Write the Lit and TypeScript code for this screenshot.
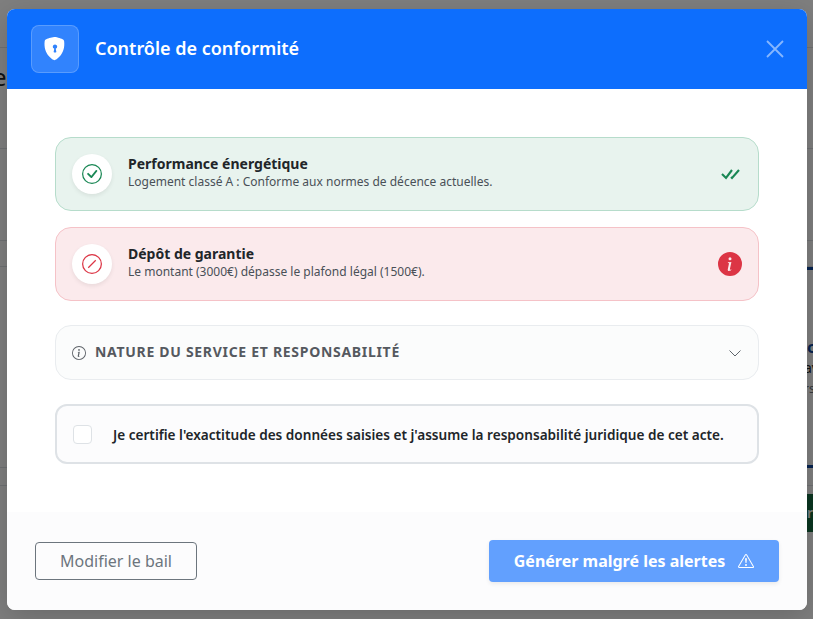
import { LitElement, html, css } from "lit";
import { customElement } from "lit/decorators.js";

@customElement("app-root")
export class AppRoot extends LitElement {
  static styles = css`
    :host { display: block; width: 813px; height: 619px; position: relative; overflow: hidden; font-family: "Noto Sans", sans-serif; color: #212529; background: #fff; }
    * { box-sizing: border-box; }
    .page { height: 619px; display: flex; flex-direction: column; overflow: hidden; }
    .prow { display: flex; justify-content: space-between; border-bottom: 1px solid #dee2e6; flex: none; }
    .r1 { height: 48px; }
    .r2 { height: 101px; align-items: flex-start; }
    .r3 { height: 92px; }
    .r4 { height: 26px; }
    .r5 { height: 201px; justify-content: flex-end; align-items: flex-start; }
    .r6 { height: 18px; }
    .r7 { flex: 1; border-bottom: 0; justify-content: flex-end; }
    .le { font-size: 24px; line-height: 32px; margin: 13px 0 0 -7px; color: #212529; }
    .side { width: 6px; height: 201px; margin-bottom: -1px; overflow: hidden; white-space: nowrap; display: flex; flex-direction: column; }
    .bar { width: 6px; height: 3px; background: #0d47a1; flex: none; }
    .sc { color: #0d47a1; font-weight: 700; font-size: 16px; line-height: 22px; margin-top: 66px; }
    .sa { font-size: 14px; line-height: 21px; margin-top: -1px; margin-left: -3px; }
    .sr { font-size: 12px; line-height: 21px; color: #6c757d; margin-left: -3px; }
    .bar2 { margin-top: auto; }
    .green { width: 6px; height: 38px; margin-top: 8px; background: #146c43; color: #fff; font-size: 14px; font-weight: 600; line-height: 38px; overflow: hidden; }

    .backdrop { position: absolute; inset: 0; background: rgba(0,0,0,.5); display: flex; justify-content: center; padding: 9px 0 0 1px; }
    .modal { width: 800px; height: 601px; flex: none; background: #fff; border-radius: 8px; overflow: hidden; display: flex; flex-direction: column; box-shadow: 0 8px 32px rgba(0,0,0,.18); }
    .head { height: 80px; flex: none; background: #0d6efd; display: flex; align-items: center; padding: 0 23px 0 24px; color: #fff; }
    .logo { width: 48px; height: 48px; border-radius: 8px; background: rgba(255,255,255,.15); border: 1px solid rgba(255,255,255,.2); display: flex; align-items: center; justify-content: center; margin-right: 16px; }
    .title { font-size: 18px; font-weight: 600; line-height: 27px; flex: 1; padding-bottom: 2px; }
    .close { width: 18px; height: 18px; display: block; }
    .body { flex: 1; padding: 48px 48px 0; display: flex; flex-direction: column; }
    .card { height: 74px; border-radius: 16px; border: 1px solid; display: flex; align-items: center; padding: 0 16px; margin-bottom: 16px; }
    .ok { background: #e8f3ee; border-color: #b6dccb; }
    .bad { background: #fbeaec; border-color: #f5c2c7; }
    .ic { width: 40px; height: 40px; border-radius: 50%; background: #fff; box-shadow: 0 2px 4px rgba(0,0,0,.075); display: flex; align-items: center; justify-content: center; margin-right: 16px; flex: none; }
    .txt { flex: 1; padding-bottom: 4px; }
    .t { font-size: 14px; font-weight: 700; line-height: 20px; color: #212529; }
    .s { font-size: 12px; line-height: 16px; color: #495057; }
    .acc { height: 55px; margin-top: 8px; border: 1px solid #e9ecef; border-radius: 16px; background: #fbfcfc; display: flex; align-items: center; padding: 0 16px; }
    .acc-t { flex: 1; margin-left: 9px; font-size: 14px; font-weight: 700; letter-spacing: .7px; line-height: 20px; padding-bottom: 2px; color: #55595f; }
    .chev { margin-right: 1px; }
    .cert { height: 60px; margin-top: 24px; border: 2px solid #dee2e6; border-radius: 12px; background: #fcfcfd; display: flex; align-items: center; padding: 0 16px; }
    .cb { width: 19px; height: 19px; border: 1px solid #dee2e6; border-radius: 4px; background: #fff; margin-right: 21px; flex: none; }
    .cert-t { font-size: 13.6px; font-weight: 600; color: #212529; }
    .foot { height: 98px; flex: none; background: #fcfcfd; display: flex; align-items: center; justify-content: space-between; padding: 0 28px; }
    .b1 { width: 162px; height: 38px; border: 1px solid #6c757d; border-radius: 4px; display: flex; align-items: center; justify-content: center; color: #6c757d; font-size: 16px; }
    .b2 { width: 290px; height: 42px; border-radius: 4px; background: #62a0fe; color: #fff; font-size: 16px; font-weight: 700; display: flex; align-items: center; justify-content: center; gap: 13px; box-shadow: 0 2px 4px rgba(0,0,0,.075); }
  `;

  render() {
    return html`
      <div class="page">
        <div class="prow r1"></div>
        <div class="prow r2"><span class="le">e</span></div>
        <div class="prow r3"></div>
        <div class="prow r4"></div>
        <div class="prow r5">
          <div class="side"><div class="bar"></div><span class="sc">c</span><span class="sa">av</span><span class="sr">rs</span><div class="bar bar2"></div></div>
        </div>
        <div class="prow r6"></div>
        <div class="prow r7"><div class="green">r</div></div>
      </div>
      <div class="backdrop">
        <div class="modal">
          <div class="head">
            <div class="logo">
              <svg width="24" height="24" viewBox="0 0 16 16" fill="#fff"><path fill-rule="evenodd" d="M8 0c-.69 0-1.84.28-2.92.57C3.95.88 2.84 1.23 2.18 1.44c-.55.18-.97.68-1.05 1.25C.55 7.04 1.9 10.25 3.53 12.39a11.6 11.6 0 0 0 2.42 2.3c.34.24.65.42.92.55.24.12.52.21.73.21s.49-.09.73-.21c.27-.13.58-.31.92-.55a11.6 11.6 0 0 0 2.42-2.3c1.63-2.14 2.98-5.35 2.4-9.7-.08-.57-.5-1.07-1.05-1.25-.66-.21-1.77-.56-2.9-.87C9.84.28 8.69 0 8 0zm0 5a1.5 1.5 0 0 1 .5 2.91l.39 1.93A.5.5 0 0 1 8.4 10.4H7.6a.5.5 0 0 1-.49-.56l.39-1.93A1.5 1.5 0 0 1 8 5z"/></svg>
            </div>
            <div class="title">Contrôle de conformité</div>
            <svg class="close" viewBox="0 0 18 18" stroke="#fff" stroke-opacity=".5" stroke-width="1.8" fill="none"><path d="M1 1l16 16M17 1L1 17"/></svg>
          </div>
          <div class="body">
            <div class="card ok">
              <div class="ic"><svg width="20" height="20" viewBox="0 0 16 16" fill="#198754"><path d="M8 15A7 7 0 1 1 8 1a7 7 0 0 1 0 14zm0 1A8 8 0 1 0 8 0a8 8 0 0 0 0 16z"/><path d="M10.97 4.97a.235.235 0 0 0-.02.022L7.477 9.417 5.384 7.323a.75.75 0 0 0-1.06 1.06L6.97 11.03a.75.75 0 0 0 1.079-.02l3.992-4.99a.75.75 0 0 0-1.071-1.05z"/></svg></div>
              <div class="txt"><div class="t">Performance énergétique</div><div class="s">Logement classé A : Conforme aux normes de décence actuelles.</div></div>
              <svg class="chev" width="20" height="14" viewBox="0 0 20 14" fill="none" stroke="#198754" stroke-width="2.100"><path d="M1 7l4 4 6-8M10 10l1 1 7-8"/></svg>
            </div>
            <div class="card bad">
              <div class="ic"><svg width="20" height="20" viewBox="0 0 16 16" fill="none" stroke="#dc3545"><circle cx="8" cy="8" r="7.5"/><path d="M5 11l6-6" stroke-width="1"/></svg></div>
              <div class="txt"><div class="t">Dépôt de garantie</div><div class="s">Le montant (3000€) dépasse le plafond légal (1500€).</div></div>
              <svg width="24" height="24" viewBox="0 0 16 16" fill="#dc3545"><path d="M8 16A8 8 0 1 0 8 0a8 8 0 0 0 0 16zm.93-9.412-1 4.705c-.07.34.029.533.304.533.194 0 .487-.07.686-.246l-.088.416c-.287.346-.92.598-1.465.598-.703 0-1.002-.422-.808-1.319l.738-3.468c.064-.293.006-.399-.287-.47l-.451-.081.082-.381 2.29-.287zM8 5.5a1 1 0 1 1 0-2 1 1 0 0 1 0 2z"/></svg>
            </div>
            <div class="acc">
              <svg width="14" height="14" viewBox="0 0 16 16" fill="#5c6167"><path d="M8 15A7 7 0 1 1 8 1a7 7 0 0 1 0 14zm0 1A8 8 0 1 0 8 0a8 8 0 0 0 0 16z"/><path d="m8.93 6.588-2.29.287-.082.38.45.083c.294.07.352.176.288.469l-.738 3.468c-.194.897.105 1.319.808 1.319.545 0 1.178-.252 1.465-.598l.088-.416c-.2.176-.492.246-.686.246-.275 0-.375-.193-.304-.533L8.93 6.588zM9 4.5a1 1 0 1 1-2 0 1 1 0 0 1 2 0z"/></svg>
              <div class="acc-t">NATURE DU SERVICE ET RESPONSABILITÉ</div>
              <svg width="14" height="14" viewBox="0 0 14 14" fill="none" stroke="#5f666d" stroke-width="1"><path d="M1.500 4.500l5.500 5.500 5.500-5.500"/></svg>
            </div>
            <div class="cert"><div class="cb"></div><div class="cert-t">Je certifie l'exactitude des données saisies et j'assume la responsabilité juridique de cet acte.</div></div>
          </div>
          <div class="foot">
            <div class="b1">Modifier le bail</div>
            <div class="b2">Générer malgré les alertes
              <svg width="16" height="16" viewBox="0 0 16 16" fill="#fff"><path d="M7.938 2.016A.13.13 0 0 1 8.002 2a.13.13 0 0 1 .063.016.146.146 0 0 1 .054.057l6.857 11.667c.036.06.035.124.002.183a.163.163 0 0 1-.054.06.116.116 0 0 1-.066.017H1.146a.115.115 0 0 1-.066-.017.163.163 0 0 1-.054-.06.176.176 0 0 1 .002-.183L7.884 2.073a.147.147 0 0 1 .054-.057zm1.044-.45a1.13 1.13 0 0 0-1.96 0L.165 13.233c-.457.778.091 1.767.98 1.767h13.713c.889 0 1.438-.99.98-1.767L8.982 1.566z"/><path d="M7.002 12a1 1 0 1 1 2 0 1 1 0 0 1-2 0zM7.1 5.995a.905.905 0 1 1 1.8 0l-.35 3.507a.552.552 0 0 1-1.1 0L7.1 5.995z"/></svg>
            </div>
          </div>
        </div>
      </div>
    `;
  }
}
